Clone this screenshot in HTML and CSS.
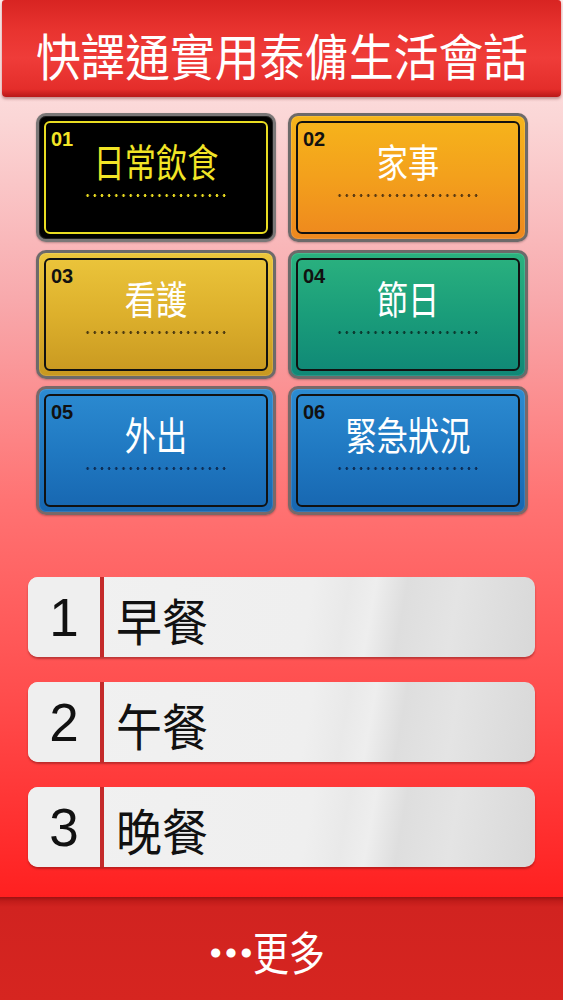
FILE: index.html
```html
<!DOCTYPE html>
<html lang="zh-Hant">
<head>
<meta charset="utf-8">
<title>快譯通實用泰傭生活會話</title>
<link rel="stylesheet" href="styles.css">
</head>
<body>
<div class="app">
  <header class="header"><h1 class="title">快譯通實用泰傭生活會話</h1></header>
  <main class="main">
    <section class="tiles">
      <div class="tile t1"><div class="tile-inner"><span class="num">01</span><span class="name">日常飲食</span><span class="dots"></span></div></div>
      <div class="tile t2"><div class="tile-inner"><span class="num">02</span><span class="name">家事</span><span class="dots"></span></div></div>
      <div class="tile t3"><div class="tile-inner"><span class="num">03</span><span class="name">看護</span><span class="dots"></span></div></div>
      <div class="tile t4"><div class="tile-inner"><span class="num">04</span><span class="name">節日</span><span class="dots"></span></div></div>
      <div class="tile t5"><div class="tile-inner"><span class="num">05</span><span class="name">外出</span><span class="dots"></span></div></div>
      <div class="tile t6"><div class="tile-inner"><span class="num">06</span><span class="name">緊急狀況</span><span class="dots"></span></div></div>
    </section>
    <section class="list">
      <div class="row"><span class="row-num">1</span><span class="row-bar"></span><span class="row-text">早餐</span></div>
      <div class="row"><span class="row-num">2</span><span class="row-bar"></span><span class="row-text">午餐</span></div>
      <div class="row"><span class="row-num">3</span><span class="row-bar"></span><span class="row-text">晚餐</span></div>
    </section>
  </main>
  <footer class="footer"><span class="more"><span class="ell">…</span><span class="more-text">更多</span></span></footer>
</div>
</body>
</html>
```

FILE: styles.css
```css
* { box-sizing: border-box; }
html, body { margin: 0; padding: 0; }
body {
  width: 563px;
  height: 1000px;
  overflow: hidden;
  font-family: "Noto Sans CJK TC", "Noto Sans", sans-serif;
}
.app {
  display: flex;
  flex-direction: column;
  height: 1000px;
  background: linear-gradient(180deg, #fdecec 0px, #fbd6d6 120px, #f8a9ac 300px, #ff7373 500px, #ff4c4c 700px, #ff2020 897px);
}
.header {
  margin: 0 2px;
  height: 97px;
  border-radius: 3px 3px 4px 4px;
  background: linear-gradient(180deg, #d82422 0%, #e8332f 30%, #ef3c39 60%, #e42d2a 92%, #b81818 100%);
  box-shadow: 0 2px 3px rgba(90, 0, 0, 0.35);
  display: flex;
  align-items: center;
  justify-content: center;
  flex-shrink: 0;
}
.title {
  margin: 10px 0 0;
  color: #fff;
  font-size: 50px;
  font-weight: 400;
  line-height: 1;
  white-space: nowrap;
  transform: scaleX(0.895);
}
.main {
  flex: 1;
  display: flex;
  flex-direction: column;
}
.tiles {
  display: grid;
  grid-template-columns: 240px 240px;
  grid-auto-rows: 129px;
  column-gap: 12px;
  row-gap: 7.5px;
  padding: 16px 0 0 36px;
}
.tile {
  border: 3px solid #6d6a6a;
  border-radius: 10px;
  padding: 5px;
  box-shadow: 0 1px 2px rgba(0,0,0,0.25), inset 0 0 0 1px rgba(255,255,255,0.12);
}
.tile-inner {
  position: relative;
  height: 100%;
  border: 2px solid #111;
  border-radius: 6px;
  display: flex;
  flex-direction: column;
  align-items: center;
  padding-top: 17px;
}
.num {
  position: absolute;
  left: 5px;
  top: 6px;
  font-family: "Liberation Sans", Arial, sans-serif;
  font-weight: 700;
  font-size: 20px;
  line-height: 1;
  color: #111;
}
.name {
  display: block;
  font-size: 39px;
  line-height: 41px;
  color: #fff;
  font-weight: 400;
  white-space: nowrap;
  transform: scaleX(0.8);
}
.dots {
  display: block;
  margin-top: 13px;
  width: 144px;
  height: 3px;
  background-image: radial-gradient(circle, var(--dot) 1.2px, transparent 1.5px);
  background-size: 7.2px 3px;
  background-repeat: repeat-x;
}
.t1 { background: #000; border-color: #7a7777; }
.t1 .tile-inner { border-color: #e9dc22; }
.t1 .num, .t1 .name { color: #f2e526; }
.t1 .dots { --dot: #e6d820; }
.t2 { background: linear-gradient(180deg, #f6b51b 0%, #f3a01c 50%, #ee881e 100%); }
.t2 .dots { --dot: #5a3a12; }
.t3 { background: linear-gradient(180deg, #ecc63c 0%, #ddb02c 50%, #c89820 100%); }
.t3 .dots { --dot: #4e3b10; }
.t4 { background: linear-gradient(180deg, #2bb27f 0%, #1a9d7a 50%, #0f8776 100%); }
.t4 .dots { --dot: #0b3a30; }
.t5, .t6 { background: linear-gradient(180deg, #2c8bd1 0%, #2079c2 50%, #1766b0 100%); border-color: #7a6868; }
.t5 .dots, .t6 .dots { --dot: #0d2d55; }

.list {
  display: flex;
  flex-direction: column;
  gap: 25px;
  padding: 62px 28px 0 28px;
}
.row {
  display: flex;
  align-items: stretch;
  height: 80px;
  border-radius: 10px;
  overflow: hidden;
  background: linear-gradient(100deg, #f1f1f1 0%, #efefef 55%, #e9e9e9 62%, #eeeeee 67%, #dedede 73%, #e4e4e4 83%, #d8d8d8 100%);
  box-shadow: 0 2px 2px rgba(110, 20, 20, 0.45);
}
.row-num {
  width: 72px;
  display: flex;
  align-items: center;
  justify-content: center;
  font-family: "Liberation Sans", Arial, sans-serif;
  font-size: 53px;
  color: #111;
  background: #efefef;
}
.row-bar {
  width: 4px;
  background: #c42a2a;
}
.row-text {
  display: flex;
  align-items: center;
  padding-left: 13px;
  padding-top: 3px;
  font-size: 50px;
  color: #111;
  white-space: nowrap;
  transform: scaleX(0.92);
  transform-origin: left center;
}
.footer {
  height: 103px;
  flex-shrink: 0;
  display: flex;
  align-items: center;
  justify-content: center;
  padding-right: 10px;
  background: linear-gradient(180deg, #9c1212 0px, #c11c1a 4px, #d12320 10px, #d62520 100%);
}
.more {
  display: flex;
  align-items: center;
  color: #fff;
  font-size: 46px;
  line-height: 1;
  margin-top: 2px;
  white-space: nowrap;
}
.ell {
  display: block;
  width: 42px;
  margin-right: 3px;
  font-size: 46px;
  -webkit-text-stroke: 3px #fff;
}
.more-text {
  display: block;
  width: 92px;
  transform: scaleX(0.78);
  transform-origin: left center;
}
```
